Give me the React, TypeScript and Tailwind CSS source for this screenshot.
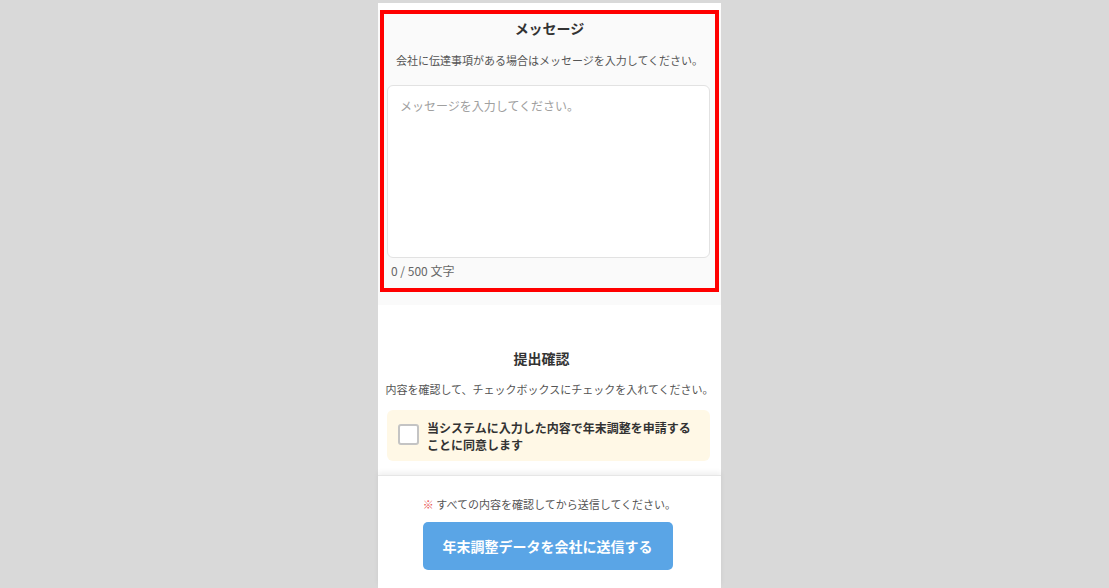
export default function App() {
  return (
    <div
      className="h-[588px] w-full overflow-hidden bg-[#d9d9d9]"
      style={{ fontFamily: '"Noto Sans CJK JP", "Noto Sans", sans-serif' }}
    >
      <div className="ml-[378px] mt-[3px] flex h-[585px] w-[343px] flex-col bg-white pt-[7px]">
        {/* メッセージ */}
        <section className="h-[295px] bg-[#fafafa]">
          <div className="mx-[2px] h-[282px] border-4 border-[#ff0000]">
            <h2 className="mt-[4px] text-center text-[14px] font-bold leading-[20px] text-[#333]">
              メッセージ
            </h2>
            <p className="mt-[14px] text-center text-[11px] leading-[16px] text-[#555]">
              会社に伝達事項がある場合はメッセージを入力してください。
            </p>
            <textarea
              className="ml-[3px] mt-[17px] block h-[173px] w-[323px] resize-none rounded-md border border-[#e2e2e2] bg-white px-[12px] pt-[11px] text-[12px] leading-[18px] text-[#333] placeholder:text-[#a0a0a0] focus:outline-none"
              placeholder="メッセージを入力してください。"
            />
            <p className="ml-[7px] mt-[5px] text-[12px] leading-[16px] text-[#666]">0 / 500 文字</p>
          </div>
        </section>

        {/* 提出確認 */}
        <section className="px-[4px]">
          <h2 className="mt-[43px] pr-[16px] text-center text-[14px] font-bold leading-[20px] text-[#333]">
            提出確認
          </h2>
          <p className="mt-[13px] whitespace-nowrap text-center text-[11px] leading-[16px] text-[#555]">
            内容を確認して、チェックボックスにチェックを入れてください。
          </p>
          <label className="ml-[5px] mt-[13px] flex h-[51px] w-[323px] items-center gap-[8px] rounded-md bg-[#fff8e6] pl-[11px]">
            <span className="mt-[-2px] block h-[21px] w-[21px] shrink-0 rounded-[3px] border-2 border-[#c4c4c4] bg-white" />
            <span className="text-[12px] font-bold leading-[17px] text-[#333]">
              当システムに入力した内容で年末調整を申請する
              <br />
              ことに同意します
            </span>
          </label>
        </section>

        {/* 送信 */}
        <footer className="mt-[14px] flex flex-1 flex-col items-center border-t border-[#e6e6e6] bg-white pt-[20px] shadow-[0_-3px_5px_rgba(0,0,0,0.06)]">
          <p className="text-[11px] leading-[16px] text-[#555]">
            <span className="text-[#e85555]">※</span> すべての内容を確認してから送信してください。
          </p>
          <button className="mr-[4px] mt-[10px] h-[48px] w-[250px] rounded-[5px] bg-[#5aa5e6] text-[14px] font-bold text-white">
            年末調整データを会社に送信する
          </button>
        </footer>
      </div>
    </div>
  );
}
